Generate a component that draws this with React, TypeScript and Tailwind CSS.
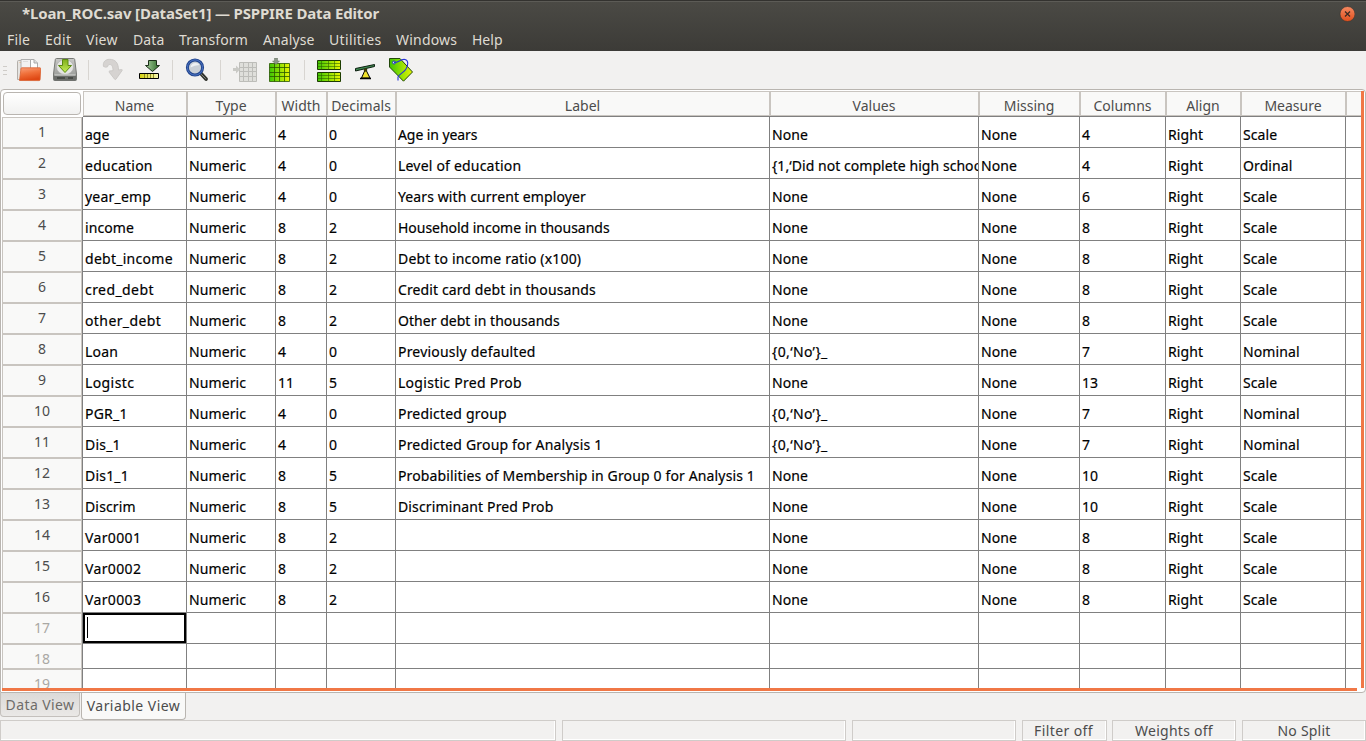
import React from "react";

const COLS =
  "grid grid-cols-[81px_104px_89px_51px_69px_374px_209px_101px_86px_75px_105px_15px]";

const HEADERS = [
  "Name",
  "Type",
  "Width",
  "Decimals",
  "Label",
  "Values",
  "Missing",
  "Columns",
  "Align",
  "Measure",
];

type Variable = {
  name: string;
  nameTracking: string;
  width: string;
  decimals: string;
  label: string;
  labelTracking: string;
  values: string;
  columns: string;
  measure: string;
};

function v(
  name: string,
  nameTracking: string,
  width: string,
  decimals: string,
  label: string,
  labelTracking: string,
  values: string,
  columns: string,
  measure: string,
): Variable {
  return { name, nameTracking, width, decimals, label, labelTracking, values, columns, measure };
}

const ROWS: Variable[] = [
  v("age", "tracking-[0px]", "4", "0", "Age in years", "tracking-[-0.08px]", "None", "4", "Scale"),
  v("education", "tracking-[0.25px]", "4", "0", "Level of education", "tracking-[0.2px]", "{1,‘Did not complete high school’}_", "4", "Ordinal"),
  v("year_emp", "tracking-[0.2px]", "4", "0", "Years with current employer", "tracking-[0.1px]", "None", "6", "Scale"),
  v("income", "tracking-[0.1px]", "8", "2", "Household income in thousands", "tracking-[-0.03px]", "None", "8", "Scale"),
  v("debt_income", "tracking-[0.27px]", "8", "2", "Debt to income ratio (x100)", "tracking-[0.17px]", "None", "8", "Scale"),
  v("cred_debt", "tracking-[0.42px]", "8", "2", "Credit card debt in thousands", "tracking-[0.11px]", "None", "8", "Scale"),
  v("other_debt", "tracking-[0.4px]", "8", "2", "Other debt in thousands", "tracking-[0.03px]", "None", "8", "Scale"),
  v("Loan", "tracking-[0.2px]", "4", "0", "Previously defaulted", "tracking-[0.2px]", "{0,‘No’}_", "7", "Nominal"),
  v("Logistc", "tracking-[0.4px]", "11", "5", "Logistic Pred Prob", "tracking-[0.28px]", "None", "13", "Scale"),
  v("PGR_1", "tracking-[0.2px]", "4", "0", "Predicted group", "tracking-[0.2px]", "{0,‘No’}_", "7", "Nominal"),
  v("Dis_1", "tracking-[0.2px]", "4", "0", "Predicted Group for Analysis 1", "tracking-[0.19px]", "{0,‘No’}_", "7", "Nominal"),
  v("Dis1_1", "tracking-[0.2px]", "8", "5", "Probabilities of Membership in Group 0 for Analysis 1", "tracking-[0.14px]", "None", "10", "Scale"),
  v("Discrim", "tracking-[0.15px]", "8", "5", "Discriminant Pred Prob", "tracking-[0.14px]", "None", "10", "Scale"),
  v("Var0001", "tracking-[0.35px]", "8", "2", "", "", "None", "8", "Scale"),
  v("Var0002", "tracking-[0.35px]", "8", "2", "", "", "None", "8", "Scale"),
  v("Var0003", "tracking-[0.35px]", "8", "2", "", "", "None", "8", "Scale"),
];

const MENU: [string, string][] = [
  ["File", "w-[38px] tracking-[0.2px]"],
  ["Edit", "w-[41px] tracking-[0.3px]"],
  ["View", "w-[47px] tracking-[0.3px]"],
  ["Data", "w-[46px] tracking-[0.1px]"],
  ["Transform", "w-[84px] tracking-[0.1px]"],
  ["Analyse", "w-[66px] tracking-[0.1px]"],
  ["Utilities", "w-[67px] tracking-[0.35px]"],
  ["Windows", "w-[76px] tracking-[0.2px]"],
  ["Help", "w-[40px]"],
];

function Icon({ className, children }: { className: string; children: React.ReactNode }) {
  return (
    <svg width="24" height="24" viewBox="0 0 24 24" className={`shrink-0 ${className}`}>
      {children}
    </svg>
  );
}

function Separator({ className }: { className: string }) {
  return <div className={`h-5 w-px shrink-0 bg-[#d8d5d1] ${className}`} />;
}

function Toolbar() {
  return (
    <div className="flex h-[38px] shrink-0 items-center bg-[#f2f1f0] pl-[3px]">
      <div className="flex w-[4px] flex-col gap-[3px]">
        <div className="h-px bg-[#cfccc8]" />
        <div className="h-px bg-[#cfccc8]" />
        <div className="h-px bg-[#cfccc8]" />
      </div>
      <Icon className="ml-[10px]">
        <defs>
          <linearGradient id="fo" x1="0" y1="0" x2="0.3" y2="1">
            <stop offset="0" stopColor="#f9a27c" />
            <stop offset="0.5" stopColor="#f0703a" />
            <stop offset="1" stopColor="#df4814" />
          </linearGradient>
        </defs>
        <path d="M.5 21.500V3.500q0-1 1-1H7v19z" fill="#e6e4e1" stroke="#b3afaa" />
        <path d="M2.500 4.500H6" stroke="#efc08a" strokeWidth="1" />
        <path d="M4 12V1.500h9.500V12z" fill="#f2f2f2" stroke="#b0b0b0" />
        <path d="M6 3.500h5" stroke="#ddd" />
        <path d="M13.500 12V1.500H17l3.500 3.500V12z" fill="#fdfdfd" stroke="#aaa" />
        <path d="M17 1.500V5h3.500" fill="#ddd" stroke="#aaa" />
        <path d="M2.500 22.500 4 10.500q.1-.7.800-.7H23q.7 0 .7.800l-.6 11q0 1-1 1z" fill="url(#fo)" stroke="#d9602f" strokeWidth=".8" />
      </Icon>
      <Icon className="ml-[12px]">
        <defs>
          <linearGradient id="dk" x1="0" y1="0" x2="0" y2="1">
            <stop offset="0" stopColor="#c9c9c7" />
            <stop offset="1" stopColor="#8f918e" />
          </linearGradient>
          <linearGradient id="ga" x1="0" y1="0" x2="0" y2="1">
            <stop offset="0" stopColor="#7fae1c" />
            <stop offset="1" stopColor="#c6ee58" />
          </linearGradient>
        </defs>
        <path d="M3.500.5h17q1 0 1.200 1L23.500 16v5.500q0 1-1 1h-21q-1 0-1-1V16L2.300 1.500q.2-1 1.200-1z" fill="url(#dk)" stroke="#777975" />
        <ellipse cx="12" cy="9" rx="8.500" ry="7.500" fill="#e4e4e2" stroke="#aaa" strokeWidth=".6" />
        <path d="M1 17.500h22v4q0 1-1 1H2q-1 0-1-1z" fill="#6b6d6a" />
        <path d="M1.500 17h21" stroke="#d9dad7" />
        <path d="M4 20h8M15 20h5" stroke="#3f413e" strokeWidth="1.500" />
        <path d="M9.500 1.500h5.500V7.500h3.500L12 14.500 5.500 7.500h4z" fill="url(#ga)" stroke="#5b8a12" />
      </Icon>
      <Separator className="ml-[11px]" />
      <Icon className="ml-[12px]">
        <path
          d="M2.500 8.500C1.500 4 4.500 1.300 8.500 1.300c6 0 9 3.700 9 10.700l3-.5q1.200 0 .5 1.200L15 21.200q-.7.8-1.400 0L8.200 14.200q-.6-1 .5-1.300l3.300-.2C12 9 11 6.500 8.800 6.500c-1.800 0-1.600 1.500-2.300 2.300q-1.500 1-4-.3z"
          fill="#d6d3d1"
          stroke="#c7c4c1"
          strokeWidth=".8"
        />
      </Icon>
      <Icon className="ml-[13px]">
        <defs>
          <linearGradient id="ia" x1="0" y1="0" x2="1" y2="0">
            <stop offset="0" stopColor="#a9cfa0" />
            <stop offset="1" stopColor="#2c6b25" />
          </linearGradient>
          <linearGradient id="iy" x1="0" y1="0" x2="1" y2="0">
            <stop offset="0" stopColor="#d3cf0d" />
            <stop offset="1" stopColor="#f8f7b5" />
          </linearGradient>
        </defs>
        <path d="M10.500 2.500h8V7.500H21.500L14.500 13.500 7.500 7.500h3z" fill="url(#ia)" stroke="#1b2f18" />
        <path d="M1.500 15.500h19v5h-19z" fill="url(#iy)" stroke="#000" />
        <path d="M6.500 16v4M9.500 16v4M12.500 16v4M15.500 16v4" stroke="#77750f" strokeWidth=".8" />
      </Icon>
      <Separator className="ml-[10px]" />
      <Icon className="ml-[12px]">
        <path d="m15.500 15 5.500 6" stroke="#33352f" strokeWidth="3.800" strokeLinecap="round" />
        <path d="m16.500 16.500 4 4" stroke="#858782" strokeWidth="1" strokeLinecap="round" />
        <circle cx="10" cy="9.500" r="7.600" fill="#c9cfd6" stroke="#24468d" strokeWidth="3" />
        <circle cx="10" cy="9.500" r="7.600" fill="none" stroke="#4a73c4" strokeWidth="1" />
        <path d="M5.500 9.500Q6 5 10.500 5q3 0 4 2-5 0-9 2.500z" fill="#eef1f4" />
      </Icon>
      <Separator className="ml-[11px]" />
      <Icon className="ml-[12px]">
        <path d="M6.500 4.500h17v19h-17z" fill="#dfdfdb" />
        <path d="M6.500 4.500h17v19h-17zM6.500 9.500h17M6.500 13.500h17M6.500 18.500h17M10.500 4.500v19M15.500 4.500v19M19.500 4.500v19" fill="none" stroke="#bdbdb9" />
        <path d="M0 10h3V7.500l4 4-4 4V13H0z" fill="#c9c9c5" />
      </Icon>
      <Icon className="ml-[12px]">
        <defs>
          <linearGradient id="gg" x1="0" y1="0" x2="1" y2="0">
            <stop offset="0" stopColor="#3fc403" />
            <stop offset="0.500" stopColor="#8fe004" />
            <stop offset="1" stopColor="#e8f603" />
          </linearGradient>
        </defs>
        <path d="M.5 5.500h20v18H.5z" fill="url(#gg)" />
        <path d="M.5 5.500h20v18H.5zM.5 9.500h20M.5 14.500h20M.5 18.500h20M5.500 5.500v18M10.500 5.500v18M15.500 5.500v18" fill="none" stroke="#285600" strokeWidth=".8" />
        <path d="M5.500 0h3v3h2L7 6.500 3.500 3h2z" fill="#8b9688" stroke="#64705f" strokeWidth=".5" />
      </Icon>
      <Separator className="ml-[11px]" />
      <Icon className="ml-[12px]">
        <path d="M.5 2.500h23v9H.5zM.5 14.500h23v9H.5z" fill="url(#gg)" stroke="#1c3a00" />
        <path d="M.5 5.500h23M.5 8.500h23M.5 17.500h23M.5 20.500h23M4.500 2.500v9M11.500 2.500v9M17.500 2.500v9M4.500 14.500v9M11.500 14.500v9M17.500 14.500v9" fill="none" stroke="#2e6300" strokeWidth=".6" />
      </Icon>
      <Icon className="ml-[12px]">
        <path d="M2.500 10.500 21.500 6.500v2L2.500 13z" fill="#3f8a50" stroke="#0d1f10" />
        <path d="M12.500 11 8.500 20h8.500z" fill="#f0e12a" stroke="#000" />
        <path d="M7 20.500h11" stroke="#000" strokeWidth="1.500" />
        <circle cx="12.500" cy="12" r="1.800" fill="#3c3a08" />
      </Icon>
      <Icon className="ml-[12px]">
        <path d="M.5.500h10.500L23.500 14 14.500 23.200.5 9z" fill="url(#gg)" stroke="#22480a" />
        <circle cx="5" cy="4.500" r="1.500" fill="#d7e8f5" stroke="#1a2fb0" strokeWidth=".9" />
        <path d="M5 4.500C9 5 12 .5 16 1.500s3 6 1 9.500-7 5-8 8v3.500" fill="none" stroke="#2430d8" strokeWidth="1.100" />
      </Icon>
    </div>
  );
}

function RowNumber({ n, dim }: { n: number; dim?: boolean }) {
  return (
    <div
      className={`flex justify-center overflow-hidden border-r border-r-[#808080] bg-[#f9f9f8] pt-[5px] leading-5 shadow-[inset_1px_1px_0_#c9c5c0,inset_-1px_-1px_0_#c9c5c0] ${dim ? "text-[#aaa8a4]" : "text-[#4c4c4c]"}`}
    >
      {n}
    </div>
  );
}

function Cell({ tracking = "tracking-[0.1px]", children }: { tracking?: string; children?: React.ReactNode }) {
  return (
    <div
      className={`overflow-hidden border-r border-b border-[#808080] pt-[8px] pl-[2px] leading-5 whitespace-nowrap [-webkit-text-stroke:0.18px_black] ${tracking}`}
    >
      {children}
    </div>
  );
}

function EmptyCells({ count }: { count: number }) {
  return (
    <>
      {Array.from({ length: count }, (_, i) => (
        <div key={i} className="border-r border-b border-[#808080] last:border-r-0" />
      ))}
    </>
  );
}

function Sheet() {
  return (
    <div className="flex h-[604px] shrink-0 flex-col overflow-hidden rounded-t-[4px] rounded-br-[4px] border border-[#b9b5b0] bg-white pt-px pl-px">
      <div className="flex h-[597px] shrink-0">
        <div className="flex w-[1359px] shrink-0 flex-col overflow-hidden text-[14px] text-black">
          <div className={`${COLS} h-[26px] shrink-0 text-[#4c4c4c]`}>
            <div className="mt-px mr-[2px] mb-[2px] ml-px rounded-[4px] border border-[#b9b5b0] bg-linear-to-b from-white to-[#f1f1f0]" />
            {HEADERS.map((label) => (
              <div key={label} className="border-b border-[#808080]">
                <div className="flex h-[25px] justify-center border border-[#c9c5c0] bg-[#f9f9f8] pt-[4px] leading-5">
                  <span className="-ml-px">{label}</span>
                </div>
              </div>
            ))}
            <div className="border-b border-[#808080]">
              <div className="h-[25px] border border-r-0 border-[#c9c5c0] bg-[#f9f9f8]" />
            </div>
          </div>
          {ROWS.map((r, i) => (
            <div key={r.name} className={`${COLS} h-[31px] shrink-0`}>
              <RowNumber n={i + 1} />
              <Cell tracking={r.nameTracking}>{r.name}</Cell>
              <Cell>Numeric</Cell>
              <Cell>{r.width}</Cell>
              <Cell>{r.decimals}</Cell>
              <Cell tracking={r.labelTracking}>{r.label}</Cell>
              <Cell tracking={r.values.startsWith("{0") ? "tracking-[0.35px]" : "tracking-[0.05px]"}>
                {r.values}
              </Cell>
              <Cell>None</Cell>
              <Cell>{r.columns}</Cell>
              <Cell>Right</Cell>
              <Cell>{r.measure}</Cell>
              <div className="border-b border-[#808080]" />
            </div>
          ))}
          <div className={`${COLS} h-[31px] shrink-0`}>
            <RowNumber n={17} dim />
            <div className="border-r border-b border-[#808080]">
              <div className="h-[30px] border-2 border-black pt-[2px] pl-[2px]">
                <div className="h-[21px] w-px bg-black" />
              </div>
            </div>
            <EmptyCells count={10} />
          </div>
          <div className={`${COLS} h-[25px] shrink-0`}>
            <RowNumber n={18} dim />
            <EmptyCells count={11} />
          </div>
          <div className={`${COLS} h-[25px] shrink-0`}>
            <RowNumber n={19} dim />
            <EmptyCells count={11} />
          </div>
        </div>
        <div className="w-[3px] bg-[#f07746]" />
      </div>
      <div className="h-[3px] w-[1355px] shrink-0 bg-[#f07746]" />
    </div>
  );
}

function StatusBox({ className, children }: { className: string; children?: React.ReactNode }) {
  return (
    <div
      className={`flex h-[21px] shrink-0 items-center justify-center border border-[#cfccc9] shadow-[inset_-1px_-1px_0_#ffffff] ${className}`}
    >
      {children}
    </div>
  );
}

export default function App() {
  return (
    <div className="flex h-[741px] w-[1366px] flex-col overflow-hidden bg-[#f2f1f0] font-['Noto_Sans','Open_Sans',sans-serif] text-[14px] text-[#4c4c4c]">
      <header className="flex h-[51px] shrink-0 flex-col border-t border-[#33322f] bg-linear-to-b from-[#4b4a45] to-[#3c3b37] text-[#dfdbd2]">
        <div className="flex h-[28px] items-start justify-between border-t border-[#5c5b56] pr-[11px] pl-[22px]">
          <h1 className="pt-px text-[15px] leading-5 font-bold tracking-[-0.16px] whitespace-nowrap">
            *Loan_ROC.sav [DataSet1] — PSPPIRE Data Editor
          </h1>
          <svg width="16" height="16" viewBox="0 0 16 16" className="mt-[4px]">
            <defs>
              <linearGradient id="cl" x1="0" y1="0" x2="0" y2="1">
                <stop offset="0" stopColor="#f58a62" />
                <stop offset="1" stopColor="#e04e1c" />
              </linearGradient>
            </defs>
            <circle cx="8.500" cy="8" r="7.500" fill="url(#cl)" stroke="#35342f" strokeWidth=".6" />
            <path d="m6 5.500 5 5m0-5-5 5" stroke="#3c2a22" strokeWidth="1.300" />
          </svg>
        </div>
        <nav className="flex h-[21px] items-center pl-[7px]">
          {MENU.map(([label, width]) => (
            <span key={label} className={width}>
              {label}
            </span>
          ))}
        </nav>
      </header>
      <Toolbar />
      <Sheet />
      <div className="flex h-[27px] shrink-0 items-start">
        <div className="flex h-[24px] w-[80px] items-center justify-center rounded-b-[4px] border border-t-0 border-[#c4c0bc] bg-linear-to-b from-[#dcdad8] to-[#eae8e6] tracking-[0.4px] text-[#6e6c69] whitespace-nowrap">
          Data View
        </div>
        <div className="ml-px flex h-[27px] w-[105px] items-center justify-center rounded-b-[4px] border border-t-0 border-[#b9b5b0] bg-[#f9f9f8] pb-[2px] tracking-[0.45px] whitespace-nowrap">
          Variable View
        </div>
      </div>
      <footer className="flex h-[21px] shrink-0">
        <StatusBox className="w-[556px]" />
        <StatusBox className="ml-[6px] w-[284px]" />
        <StatusBox className="ml-[6px] w-[164px]" />
        <StatusBox className="ml-[6px] w-[85px] pr-[2px] tracking-[0.4px]">Filter off</StatusBox>
        <StatusBox className="ml-[5px] w-[124px] tracking-[0.25px]">Weights off</StatusBox>
        <StatusBox className="ml-[6px] w-[124px] tracking-[0.2px]">No Split</StatusBox>
      </footer>
    </div>
  );
}
